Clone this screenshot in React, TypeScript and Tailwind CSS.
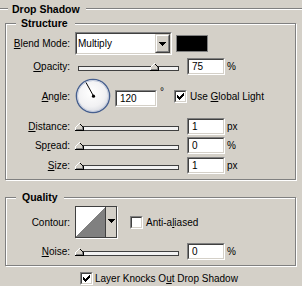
import React from 'react';

type BoxProps = { className?: string; innerClassName?: string; children?: React.ReactNode };

const Sunken = ({ className = '', innerClassName = '', children }: BoxProps) => (
  <div className={`shrink-0 border border-t-[#808080] border-l-[#808080] border-b-white border-r-white ${className}`}>
    <div className={`h-full w-full border border-t-[#404040] border-l-[#404040] border-b-[#d4d0c8] border-r-[#d4d0c8] ${innerClassName}`}>
      {children}
    </div>
  </div>
);

const Raised = ({ className = '', innerClassName = '', children }: BoxProps) => (
  <div className={`shrink-0 border border-t-[#d4d0c8] border-l-[#d4d0c8] border-b-[#404040] border-r-[#404040] ${className}`}>
    <div className={`h-full w-full border border-t-white border-l-white border-b-[#808080] border-r-[#808080] bg-[#d4d0c8] ${innerClassName}`}>
      {children}
    </div>
  </div>
);

const DownArrow = () => (
  <svg width="7" height="4" viewBox="0 0 7 4" shapeRendering="crispEdges">
    <path d="M0 0h7v1h-1v1h-1v1h-1v1h-1v-1h-1v-1h-1v-1h-1z" fill="#000" />
  </svg>
);

const Field = ({ value, className = '' }: { value: string; className?: string }) => (
  <Sunken className={`h-[17px] ${className}`} innerClassName="flex items-center bg-white pl-[3px] leading-[11px]">
    {value}
  </Sunken>
);

const Thumb = ({ left }: { left: number }) => (
  <svg className="absolute top-0" style={{ left }} width="9" height="8" viewBox="0 0 9 8" shapeRendering="crispEdges">
    <path d="M4 0h1v1h1v1h1v1h1v1h1v4h-9v-4h1v-1h1v-1h1v-1h1z" fill="#d4d0c8" />
    <path d="M4 0h1v1h-1z M3 1h1v1h-1z M2 2h1v1h-1z M1 3h1v1h-1z M0 4h1v3h-1z" fill="#fff" />
    <path d="M7 4h1v3h-1z M1 6h6v1h-6z" fill="#808080" />
    <path d="M5 1h1v1h-1z M6 2h1v1h-1z M7 3h1v1h-1z M8 4h1v4h-1z M0 7h9v1h-9z" fill="#000" />
  </svg>
);

const Slider = ({ left }: { left: number }) => (
  <div className="relative ml-[5px] mt-[5px] h-[8px] w-[108px] shrink-0 self-start">
    <div className="ml-[3px] mt-[3px] h-[5px] w-[101px] border border-[#404040] border-b-[#404040] bg-[#f2f2f2]" />
    <Thumb left={left} />
  </div>
);

const Check = ({ checked }: { checked: boolean }) => (
  <Sunken className="h-[13px] w-[13px]" innerClassName="bg-white">
    {checked && (
      <svg className="ml-[1px] mt-[1px] block" width="7" height="7" viewBox="0 0 7 7" shapeRendering="crispEdges">
        <path
          d="M0 2h1v3h-1z M1 3h1v3h-1z M2 4h1v3h-1z M3 3h1v3h-1z M4 2h1v3h-1z M5 1h1v3h-1z M6 0h1v3h-1z"
          fill="#000"
        />
      </svg>
    )}
  </Sunken>
);

const Label = ({ children }: { children: React.ReactNode }) => (
  <div className="w-[64px] shrink-0 text-right">{children}</div>
);

const U = ({ children }: { children: React.ReactNode }) => (
  <span className="underline decoration-1 underline-offset-[1px]">{children}</span>
);

const SliderRow = ({
  label,
  value,
  unit,
  left,
  className = '',
}: {
  label: React.ReactNode;
  value: string;
  unit: string;
  left: number;
  className?: string;
}) => (
  <div className={`flex h-[17px] items-center ${className}`}>
    <Label>{label}</Label>
    <Slider left={left} />
    <Field value={value} className="ml-[4px] w-[38px]" />
    <div className="ml-[2px]">{unit}</div>
  </div>
);

const Dial = () => (
  <svg width="36" height="36" viewBox="0 0 36 36" className="ml-[5px] shrink-0">
    <defs>
      <radialGradient id="dialFill" cx="45%" cy="40%" r="60%">
        <stop offset="0" stopColor="#ffffff" />
        <stop offset="0.7" stopColor="#f1f1f3" />
        <stop offset="1" stopColor="#d9dbe2" />
      </radialGradient>
    </defs>
    <circle cx="18" cy="18" r="16.6" fill="url(#dialFill)" stroke="#47608f" strokeWidth="1.4" />
    <circle cx="18" cy="18" r="15.5" fill="none" stroke="#b9c3d8" strokeWidth="0.8" />
    <line x1="18.5" y1="18" x2="11" y2="4.5" stroke="#000" strokeWidth="1" />
    <circle cx="18.5" cy="18.2" r="1.6" fill="#000" />
  </svg>
);

const Contour = () => (
  <div className="ml-[5px] flex h-[32px] w-[42px] shrink-0 border border-[#404040] shadow-[1px_1px_0_#fff]">
    <svg width="29" height="30" viewBox="0 0 29 30" className="block shrink-0" shapeRendering="crispEdges">
      <rect width="29" height="30" fill="#fff" />
      <polygon points="0,30 29,0 29,30" fill="#808080" />
    </svg>
    <div className="flex flex-1 items-center justify-center border-l border-[#404040] bg-[#d4d0c8] pb-[2px]">
      <DownArrow />
    </div>
  </div>
);

export default function App() {
  return (
    <div className="h-[286px] w-[302px] overflow-hidden bg-[#d4d0c8] font-['Liberation_Sans',Arial,sans-serif] text-[10px] leading-[13px] text-black">
      <div className="flex h-[18px] items-center">
        <div className="h-[2px] w-[8px] border-t border-b border-t-[#808080] border-b-white" />
        <div className="pl-[4px] pr-[6px] text-[10.5px] font-bold leading-[11px]">Drop Shadow</div>
        <div className="h-[2px] flex-1 border-t border-b border-t-[#808080] border-b-white" />
      </div>

      <fieldset className="ml-[5px] w-[291px] border border-[#808080] pt-[3px] pb-[5px] shadow-[inset_1px_1px_0_#fff,1px_1px_0_#fff]">
        <legend className="ml-[10px] bg-[#d4d0c8] pl-[5px] pr-[7px] text-[10.5px] font-bold leading-[11px]">
          Structure
        </legend>

        <div className="flex h-[23px] items-center">
          <Label>
            <U>B</U>lend Mode:
          </Label>
          <Sunken className="ml-[5px] h-[23px] w-[97px]" innerClassName="flex bg-white">
            <div className="flex flex-1 items-center pl-[1px]">Multiply</div>
            <Raised className="h-full w-[15px]" innerClassName="flex items-center justify-center">
              <DownArrow />
            </Raised>
          </Sunken>
          <div className="ml-[4px] h-[17px] w-[32px] border border-[#808080] bg-black" />
        </div>

        <SliderRow className="mt-[3px]" label={<><U>O</U>pacity:</>} value="75" unit="%" left={75} />

        <div className="mt-[3px] flex h-[36px] items-center">
          <Label>
            <U>A</U>ngle:
          </Label>
          <Dial />
          <Field value="120" className="ml-[4px] mt-[4px] w-[42px]" />
          <div className="w-[17px] self-start pl-[3px] pt-[7px]">°</div>
          <Check checked />
          <div className="ml-[3px]">
            Use <U>G</U>lobal Light
          </div>
        </div>

        <SliderRow className="mt-[4px]" label={<><U>D</U>istance:</>} value="1" unit="px" left={0} />
        <SliderRow className="mt-[2px]" label={<>Sp<U>r</U>ead:</>} value="0" unit="%" left={0} />
        <SliderRow className="mt-[3px]" label={<><U>S</U>ize:</>} value="1" unit="px" left={0} />
      </fieldset>

      <fieldset className="ml-[5px] mt-[12px] w-[291px] border border-[#808080] pt-[3px] pb-[5px] shadow-[inset_1px_1px_0_#fff,1px_1px_0_#fff]">
        <legend className="ml-[10px] bg-[#d4d0c8] pl-[6px] pr-[6px] text-[10.5px] font-bold leading-[11px]">
          Quality
        </legend>

        <div className="flex h-[32px] items-center">
          <Label>Contour:</Label>
          <Contour />
          <div className="ml-[13px]">
            <Check checked={false} />
          </div>
          <div className="ml-[3px]">
            Anti-a<U>l</U>iased
          </div>
        </div>

        <SliderRow className="mt-[5px]" label={<><U>N</U>oise:</>} value="0" unit="%" left={0} />
      </fieldset>

      <div className="mt-[6px] flex h-[13px] items-center pl-[80px]">
        <Check checked />
        <div className="ml-[2px]">
          Layer Knocks O<U>u</U>t Drop Shadow
        </div>
      </div>
    </div>
  );
}
